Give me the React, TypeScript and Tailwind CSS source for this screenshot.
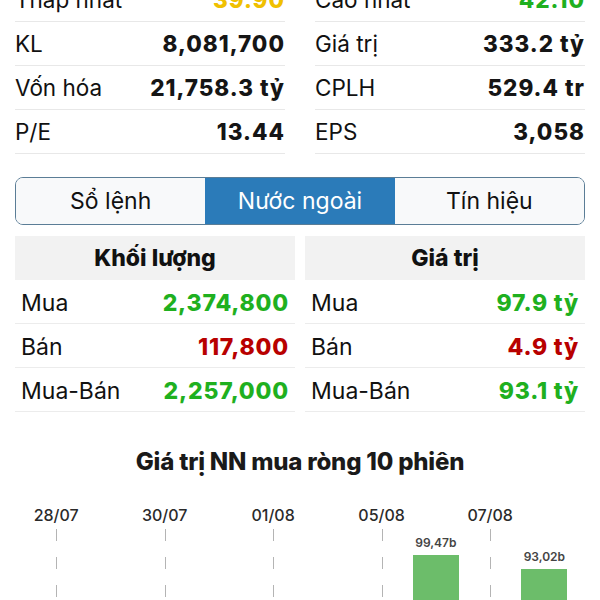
import type { ReactNode } from "react";

type Stat = { label: string; value: string; color?: string };

const leftStats: Stat[] = [
  { label: "Thấp nhất", value: "39.90", color: "text-[#f0c000]" },
  { label: "KL", value: "8,081,700" },
  { label: "Vốn hóa", value: "21,758.3 tỷ" },
  { label: "P/E", value: "13.44" },
];

const rightStats: Stat[] = [
  { label: "Cao nhất", value: "42.10", color: "text-[#1fb01f]" },
  { label: "Giá trị", value: "333.2 tỷ" },
  { label: "CPLH", value: "529.4 tr" },
  { label: "EPS", value: "3,058" },
];

const GREEN = "text-[#1fb01f]";
const RED = "text-[#b80000]";

const volumeRows: Stat[] = [
  { label: "Mua", value: "2,374,800", color: GREEN },
  { label: "Bán", value: "117,800", color: RED },
  { label: "Mua-Bán", value: "2,257,000", color: GREEN },
];

const valueRows: Stat[] = [
  { label: "Mua", value: "97.9 tỷ", color: GREEN },
  { label: "Bán", value: "4.9 tỷ", color: RED },
  { label: "Mua-Bán", value: "93.1 tỷ", color: GREEN },
];

// 10 sessions, only every other one gets a date label
const sessions: { date?: string; value: number }[] = [
  { date: "28/07", value: -12.4 },
  { value: -30.1 },
  { date: "30/07", value: -8.2 },
  { value: -21.5 },
  { date: "01/08", value: -15.3 },
  { value: -5.6 },
  { date: "05/08", value: -18.9 },
  { value: 99.47 },
  { date: "07/08", value: -3.1 },
  { value: 93.02 },
];

const PX_PER_UNIT = 2.17;

function StatRow({ stat }: { stat: Stat }) {
  return (
    <div className="h-[44px] flex items-center justify-between border-b border-[#e8e8e8] text-[22.5px]">
      <span className="text-[#111]">{stat.label}</span>
      <span className={`font-extrabold tracking-[1px] ${stat.color ?? "text-[#151515]"}`}>
        {stat.value}
      </span>
    </div>
  );
}

function ForeignColumn({ title, rows }: { title: string; rows: Stat[] }) {
  return (
    <div>
      <div className="h-[44px] bg-[#f2f2f2] flex items-center justify-center text-[23px] font-extrabold text-[#111]">
        {title}
      </div>
      {rows.map((row) => (
        <div
          key={row.label}
          className="h-[44px] pt-[3px] flex items-center justify-between px-[6px] border-b border-[#ececec] text-[23px]"
        >
          <span className="text-[#111]">{row.label}</span>
          <span className={`font-extrabold tracking-[0.8px] ${row.color}`}>{row.value}</span>
        </div>
      ))}
    </div>
  );
}

function Tab({ children, active }: { children: ReactNode; active?: boolean }) {
  return (
    <button
      type="button"
      className={`flex items-center justify-center text-[23px] ${
        active ? "bg-[#2b7bb9] text-white" : "bg-[#f8f9fa] text-[#111]"
      }`}
    >
      {children}
    </button>
  );
}

export default function App() {
  return (
    <div className="w-[600px] h-[600px] overflow-hidden bg-white font-['Inter','Noto_Sans',sans-serif]">
      {/* Price stats */}
      <div className="-mt-[22px] px-[15px] grid grid-cols-2 gap-x-[30px]">
        <div>
          {leftStats.map((s) => (
            <StatRow key={s.label} stat={s} />
          ))}
        </div>
        <div>
          {rightStats.map((s) => (
            <StatRow key={s.label} stat={s} />
          ))}
        </div>
      </div>

      {/* Tabs */}
      <div className="mx-[15px] mt-[23px] h-[48px] grid grid-cols-3 border border-[#5b7d96] rounded-[8px] overflow-hidden">
        <Tab>Sổ lệnh</Tab>
        <Tab active>Nước ngoài</Tab>
        <Tab>Tín hiệu</Tab>
      </div>

      {/* Foreign trading */}
      <div className="mt-[11px] px-[15px] grid grid-cols-2 gap-x-[10px]">
        <ForeignColumn title="Khối lượng" rows={volumeRows} />
        <ForeignColumn title="Giá trị" rows={valueRows} />
      </div>

      <h2 className="mt-[36px] h-[28px] flex items-center justify-center text-[24px] font-extrabold tracking-[-0.2px] text-[#1a1a1a]">
        Giá trị NN mua ròng 10 phiên
      </h2>

      {/* Chart */}
      <div className="mt-[29px] pl-[29px] flex">
        {sessions.map((s, i) => (
          <div key={i} className="w-[54.25px] flex flex-col items-center">
            <div className="h-[20px] flex items-center text-[16px] font-medium text-[#2a2a2a] whitespace-nowrap">
              {s.date ?? ""}
            </div>
            <div className="relative w-full h-[246px] flex flex-col items-center justify-end">
              {s.date && (
                <div className="absolute left-1/2 top-[4px] bottom-0 w-px bg-[repeating-linear-gradient(to_bottom,#b4b4b4_0px,#b4b4b4_12px,transparent_12px,transparent_28px)]" />
              )}
              {s.value > 0 && (
                <>
                  <div className="mb-[5px] text-[12px] leading-[14px] font-semibold text-[#444]">
                    {s.value.toFixed(2).replace(".", ",")}b
                  </div>
                  <div
                    className="w-[46px] bg-[#6cbd6a]"
                    style={{ height: `${s.value * PX_PER_UNIT}px` }}
                  />
                </>
              )}
            </div>
          </div>
        ))}
      </div>
    </div>
  );
}
